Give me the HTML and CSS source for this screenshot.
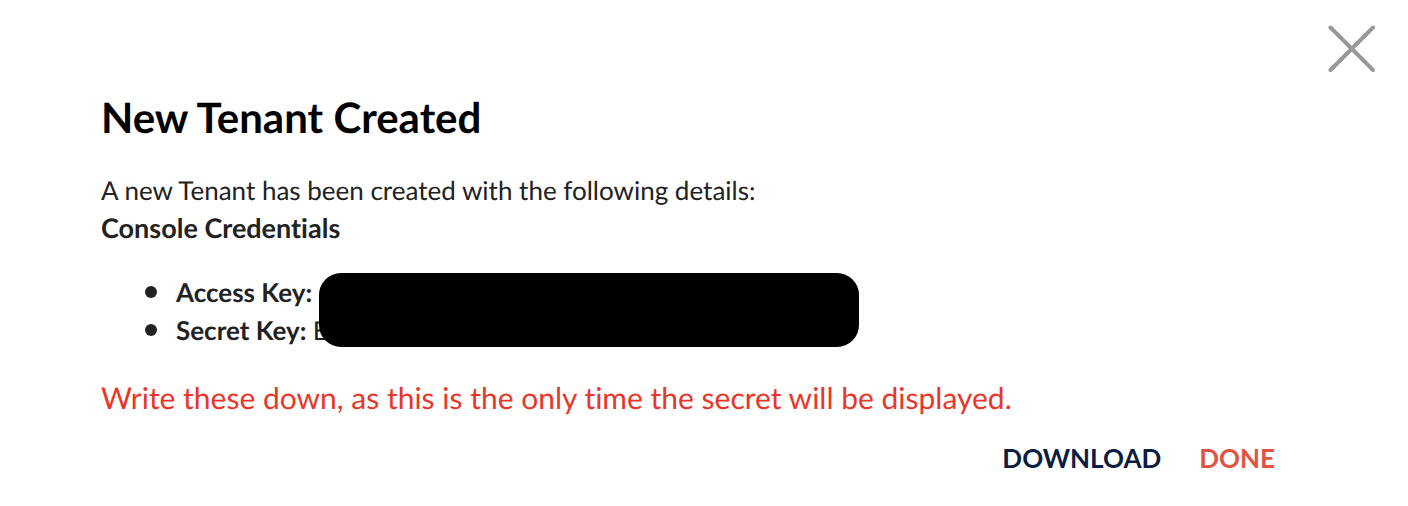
FILE: index.html
```
<!DOCTYPE html>
<html lang="en">
<head>
<meta charset="utf-8">
<title>New Tenant Created</title>
<link rel="stylesheet" href="styles.css">
</head>
<body>
<main class="dialog" role="dialog" aria-labelledby="dialog-title">
  <header class="dialog-header">
    <button class="close" type="button" aria-label="Close">
      <svg viewBox="0 0 48 48" aria-hidden="true"><path d="M2.500 2.500 45 45M45 2.500 2.500 45"/></svg>
    </button>
  </header>
  <div class="dialog-body">
    <h1 class="title" id="dialog-title">New Tenant Created</h1>
    <p class="intro">A new Tenant has been created with the following details:</p>
    <h2 class="subtitle">Console Credentials</h2>
    <div class="credentials">
      <ul class="keys">
        <li>Access Key:</li>
        <li>Secret Key:&nbsp;<span class="value">E</span></li>
      </ul>
      <div class="redaction"></div>
    </div>
    <p class="warning">Write these down, as this is the only time the secret will be displayed.</p>
    <div class="actions">
      <button class="action" type="button">DOWNLOAD</button>
      <button class="action action-done" type="button">DONE</button>
    </div>
  </div>
</main>
</body>
</html>
```
FILE: styles.css
```
* { box-sizing: border-box; }
body {
  margin: 0;
  background: #fff;
  color: #222;
  font-family: Lato, sans-serif;
  font-size: 26px;
  font-variant-ligatures: none;
  line-height: 38px;
  text-rendering: geometricPrecision;
}
h1, h2, p, ul { margin: 0; }
button {
  padding: 0;
  border: 0;
  background: none;
  font: inherit;
  cursor: pointer;
}
.dialog-header {
  display: flex;
  justify-content: flex-end;
  padding: 25px 32px 0;
}
.close { width: 48px; height: 48px; }
.close svg {
  display: block;
  width: 100%;
  fill: none;
  stroke: #999;
  stroke-width: 4;
  stroke-linecap: round;
}
.dialog-body { padding: 20px 133px 0 101px; }
.title {
  color: #000;
  font-size: 42px;
  line-height: 48px;
}
.intro { margin-top: 30px; }
.subtitle { font-size: 27px; }
.credentials {
  position: relative;
  margin-top: 26px;
}
.keys {
  padding-left: 44px;
  font-weight: 700;
  list-style: none;
}
.keys li {
  display: flex;
  align-items: center;
}
.keys li::before {
  content: "";
  width: 12px;
  height: 12px;
  margin-right: 19px;
  border-radius: 50%;
  background: #222;
}
.value { font-weight: 400; }
.redaction {
  position: absolute;
  top: 0;
  left: 218px;
  width: 540px;
  height: 74px;
  border-radius: 22px;
  background: #000;
}
.warning {
  margin-top: 30px;
  color: #e8372a;
  font-size: 30px;
}
.actions {
  display: flex;
  justify-content: flex-end;
  gap: 38px;
  margin-top: 22px;
}
.action { color: #0c1d42; font-weight: 700; }
.action-done { color: #e05443; }
```
